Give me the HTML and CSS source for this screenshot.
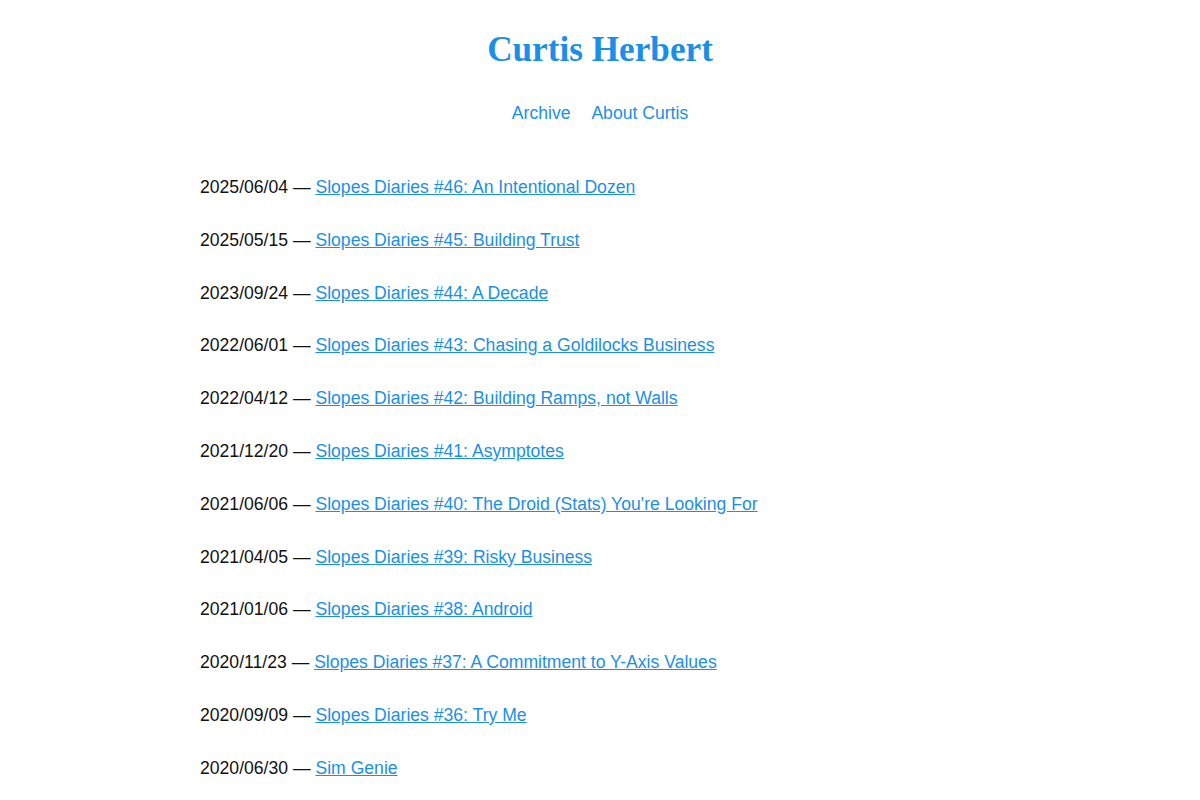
FILE: index.html
```html
<!DOCTYPE html>
<html lang="en">
<head>
    <meta charset="UTF-8">
    <meta name="viewport" content="width=device-width, initial-scale=1.0">
    <title>Curtis Herbert</title>
    <link rel="stylesheet" href="styles.css">
</head>
<body>

    <!-- site header -->
    <header class="site-header">
        <h1 class="site-title"><a href="#">Curtis Herbert</a></h1>
        <nav class="site-nav">
            <a href="#">Archive</a>
            <a href="#">About Curtis</a>
        </nav>
    </header>

    <!-- post list -->
    <main class="content">
        <ul class="post-list">
            <li>2025/06/04 — <a href="#">Slopes Diaries #46: An Intentional Dozen</a></li>
            <li>2025/05/15 — <a href="#">Slopes Diaries #45: Building Trust</a></li>
            <li>2023/09/24 — <a href="#">Slopes Diaries #44: A Decade</a></li>
            <li>2022/06/01 — <a href="#">Slopes Diaries #43: Chasing a Goldilocks Business</a></li>
            <li>2022/04/12 — <a href="#">Slopes Diaries #42: Building Ramps, not Walls</a></li>
            <li>2021/12/20 — <a href="#">Slopes Diaries #41: Asymptotes</a></li>
            <li>2021/06/06 — <a href="#">Slopes Diaries #40: The Droid (Stats) You're Looking For</a></li>
            <li>2021/04/05 — <a href="#">Slopes Diaries #39: Risky Business</a></li>
            <li>2021/01/06 — <a href="#">Slopes Diaries #38: Android</a></li>
            <li>2020/11/23 — <a href="#">Slopes Diaries #37: A Commitment to Y-Axis Values</a></li>
            <li>2020/09/09 — <a href="#">Slopes Diaries #36: Try Me</a></li>
            <li>2020/06/30 — <a href="#">Sim Genie</a></li>
        </ul>
    </main>

</body>
</html>
```

FILE: styles.css
```css
body {
    margin: 0;
    font-family: "Liberation Sans", Arial, sans-serif;
    font-size: 17.6px;
    color: #111;
    background: #fff;
}
a {
    color: #1b8fe8;
}
.site-header {
    text-align: center;
    padding-top: 29px;
}
.site-title {
    margin: 0;
    font-family: "Liberation Serif", "Times New Roman", serif;
    font-size: 35.2px;
    line-height: 42px;
}
.site-title a {
    text-decoration: none;
}
.site-nav {
    margin-top: 32px;
    line-height: 21px;
}
.site-nav a {
    text-decoration: none;
    margin: 0 8px;
}
.content {
    max-width: 800px;
    margin: 0 auto;
    padding-top: 49px;
}
.post-list {
    list-style: none;
    margin: 0;
    padding: 0;
}
.post-list li {
    line-height: 28.8px;
    margin-bottom: 24px;
}
```
